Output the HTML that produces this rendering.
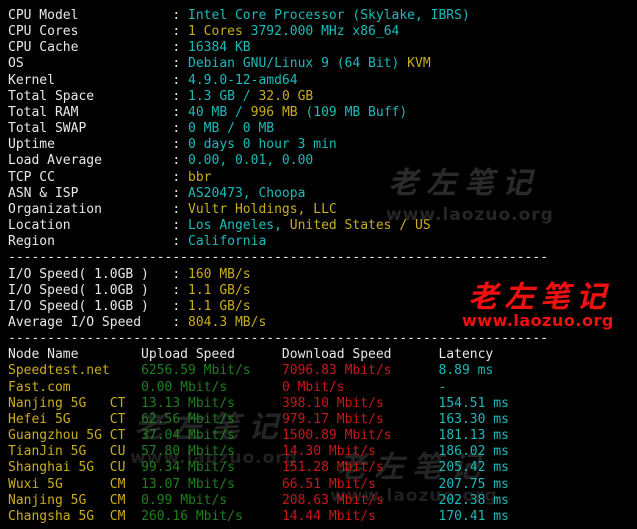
<!DOCTYPE html>
<html><head><meta charset="utf-8"><style>
html,body{margin:0;padding:0;background:#000;width:637px;height:529px;overflow:hidden}
pre{margin:0;position:absolute;left:8px;top:8px;font-family:"DejaVu Sans Mono","Liberation Mono",monospace;font-size:13px;line-height:16.16px;color:#e8e8e8}
.c{color:#1cbaba}.y{color:#c9ad1c}.g{color:#1d7f1d}.r{color:#c81818}
.wm{position:absolute;font-family:"Noto Sans CJK SC","WenQuanYi Zen Hei",sans-serif;font-weight:bold;font-style:italic;white-space:nowrap}
.wu{position:absolute;font-family:"DejaVu Sans","Liberation Sans",sans-serif;font-weight:bold;white-space:nowrap}
</style></head><body>
<div class="wm" style="left:388px;top:158px;font-size:30px;color:#2a2a2a;letter-spacing:8px">老左笔记</div>
<div class="wu" style="left:386px;top:205px;font-size:17px;color:#262626;letter-spacing:1px">www.laozuo.org</div>
<div class="wm" style="left:468px;top:272px;font-size:30px;color:#f01010;letter-spacing:6px">老左笔记</div>
<div class="wu" style="left:462px;top:311px;font-size:16px;color:#f01010;letter-spacing:0.5px">www.laozuo.org</div>
<div class="wm" style="left:134px;top:402px;font-size:30px;color:#242424;letter-spacing:8px">老左笔记</div>
<div class="wu" style="left:130px;top:448px;font-size:17px;color:#202020;letter-spacing:1px">www.laozuo.org</div>
<div class="wm" style="left:336px;top:442px;font-size:30px;color:#242424;letter-spacing:8px">老左笔记</div>
<div class="wu" style="left:330px;top:486px;font-size:17px;color:#202020;letter-spacing:1px">www.laozuo.org</div>
<pre>CPU Model            : <span class="c">Intel Core Processor (Skylake, IBRS)</span>
CPU Cores            : <span class="y">1 Cores</span> <span class="c">3792.000 MHz x86_64</span>
CPU Cache            : <span class="c">16384 KB</span>
OS                   : <span class="c">Debian GNU/Linux 9 (64 Bit)</span> <span class="y">KVM</span>
Kernel               : <span class="c">4.9.0-12-amd64</span>
Total Space          : <span class="c">1.3 GB /</span> <span class="y">32.0 GB</span>
Total RAM            : <span class="c">40 MB /</span> <span class="y">996 MB</span> <span class="c">(109 MB Buff)</span>
Total SWAP           : <span class="c">0 MB / 0 MB</span>
Uptime               : <span class="c">0 days 0 hour 3 min</span>
Load Average         : <span class="c">0.00, 0.01, 0.00</span>
TCP CC               : <span class="y">bbr</span>
ASN &amp; ISP            : <span class="c">AS20473, Choopa</span>
Organization         : <span class="y">Vultr Holdings, LLC</span>
Location             : <span class="c">Los Angeles,</span> <span class="y">United States / US</span>
Region               : <span class="c">California</span>
---------------------------------------------------------------------
I/O Speed( 1.0GB )   : <span class="y">160 MB/s</span>
I/O Speed( 1.0GB )   : <span class="y">1.1 GB/s</span>
I/O Speed( 1.0GB )   : <span class="y">1.1 GB/s</span>
Average I/O Speed    : <span class="y">804.3 MB/s</span>
---------------------------------------------------------------------
Node Name        Upload Speed      Download Speed      Latency
<span class="y">Speedtest.net    </span><span class="g">6256.59 Mbit/s    </span><span class="r">7096.83 Mbit/s      </span><span class="c">8.89 ms</span>
<span class="y">Fast.com         </span><span class="g">0.00 Mbit/s       </span><span class="r">0 Mbit/s            </span><span class="c">-</span>
<span class="y">Nanjing 5G   CT  </span><span class="g">13.13 Mbit/s      </span><span class="r">398.10 Mbit/s       </span><span class="c">154.51 ms</span>
<span class="y">Hefei 5G     CT  </span><span class="g">62.56 Mbit/s      </span><span class="r">979.17 Mbit/s       </span><span class="c">163.30 ms</span>
<span class="y">Guangzhou 5G CT  </span><span class="g">37.04 Mbit/s      </span><span class="r">1500.89 Mbit/s      </span><span class="c">181.13 ms</span>
<span class="y">TianJin 5G   CU  </span><span class="g">57.80 Mbit/s      </span><span class="r">14.30 Mbit/s        </span><span class="c">186.02 ms</span>
<span class="y">Shanghai 5G  CU  </span><span class="g">99.34 Mbit/s      </span><span class="r">151.28 Mbit/s       </span><span class="c">205.42 ms</span>
<span class="y">Wuxi 5G      CM  </span><span class="g">13.07 Mbit/s      </span><span class="r">66.51 Mbit/s        </span><span class="c">207.75 ms</span>
<span class="y">Nanjing 5G   CM  </span><span class="g">0.99 Mbit/s       </span><span class="r">208.63 Mbit/s       </span><span class="c">202.38 ms</span>
<span class="y">Changsha 5G  CM  </span><span class="g">260.16 Mbit/s     </span><span class="r">14.44 Mbit/s        </span><span class="c">170.41 ms</span></pre>
</body></html>
